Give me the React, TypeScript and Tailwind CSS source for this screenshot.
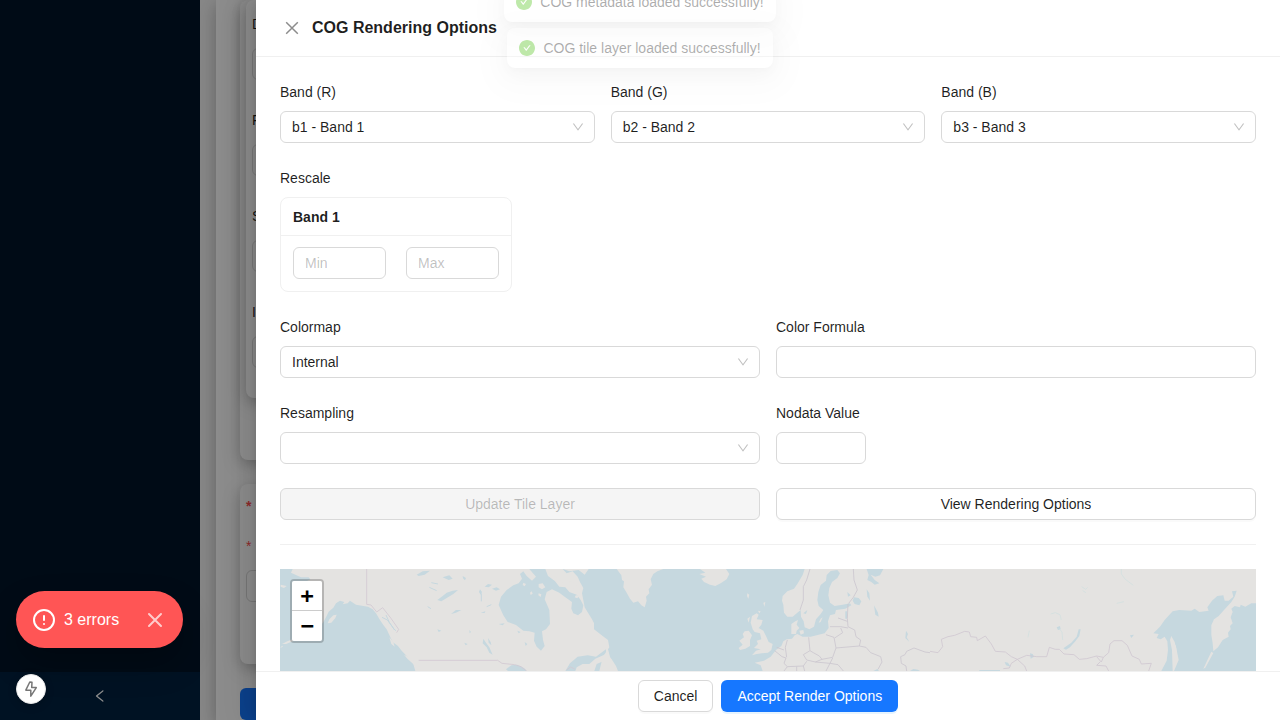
import React from "react";

const controlBase =
  "h-8 rounded-md border border-[#d9d9d9] bg-white px-[11px] text-sm text-black/88 outline-none placeholder:text-black/25 focus:border-[#1677ff]";

function Field({
  id,
  label,
  children,
}: {
  id: string;
  label: string;
  children: React.ReactNode;
}) {
  return (
    <div className="flex min-w-0 flex-1 flex-col gap-2">
      <label htmlFor={id} className="text-sm leading-[22px] text-black/88">
        {label}
      </label>
      {children}
    </div>
  );
}

function ChevronDown() {
  return (
    <svg
      viewBox="64 64 896 896"
      className="pointer-events-none absolute top-[10px] right-[11px] size-3 text-black/25"
      fill="currentColor"
      aria-hidden="true"
    >
      <path d="M884 256h-75c-5.1 0-9.9 2.5-12.9 6.6L512 654.2 227.9 262.6c-3-4.1-7.8-6.6-12.9-6.6h-75c-6.5 0-10.3 7.4-6.5 12.7l352.6 486.1c12.8 17.6 39 17.6 51.7 0l352.6-486.1c3.9-5.3.1-12.7-6.4-12.7z" />
    </svg>
  );
}

function SelectField({ id, label, options }: { id: string; label: string; options: string[] }) {
  return (
    <Field id={id} label={label}>
      <div className="relative flex">
        <select id={id} className={`${controlBase} w-full appearance-none`}>
          {options.map((o) => (
            <option key={o}>{o}</option>
          ))}
        </select>
        <ChevronDown />
      </div>
    </Field>
  );
}

function CloseIcon({ className }: { className: string }) {
  return (
    <svg
      viewBox="0 0 16 16"
      fill="none"
      stroke="currentColor"
      strokeWidth="1.500"
      className={className}
      aria-hidden="true"
    >
      <path d="M2.200 2.200L13.800 13.800M13.800 2.200L2.200 13.800" />
    </svg>
  );
}

function Toast({ text }: { text: string }) {
  return (
    <div className="flex h-10 items-center gap-2 rounded-lg bg-white px-3 text-sm text-black/88 opacity-[0.37] shadow-[0_6px_16px_0_rgba(0,0,0,0.06),0_3px_6px_-4px_rgba(0,0,0,0.08),0_9px_28px_8px_rgba(0,0,0,0.05)]">
      <svg viewBox="64 64 896 896" className="size-4 text-[#52c41a]" fill="currentColor" aria-hidden="true">
        <path d="M512 64C264.600 64 64 264.600 64 512s200.600 448 448 448 448-200.600 448-448S759.400 64 512 64zm193.500 301.700l-210.600 292a31.800 31.800 0 01-51.700 0L318.500 484.900c-3.800-5.300 0-12.700 6.500-12.700h46.900c10.200 0 19.900 4.900 25.900 13.300l71.200 98.800 157.200-218c6-8.300 15.600-13.300 25.900-13.300H699c6.500 0 10.300 7.400 6.500 12.700z" />
      </svg>
      <span>{text}</span>
    </div>
  );
}

const WATER = "#c6d8df";
const LAND = "#e4e3e1";

function WorldMap() {
  return (
    <svg
      viewBox="0 0 976 400"
      preserveAspectRatio="xMidYMin slice"
      className="size-full"
      role="img"
      aria-label="World map"
    >
      <rect width="976" height="400" fill={LAND} />
      <g transform="translate(-4 -9) scale(0.33333)" fill={WATER}>
        <path d="M12 27H50L45 38 58 44 75 52 98 52 103 58 80 70 60 90 52 120 60 150 52 185 80 205 110 205 140 190 150 172 158 155 172 143 180 130 192 122 205 126 200 133 215 130 222 122 240 134 262 138 276 140 290 148 300 160 312 180 322 195 332 208 340 225 350 246 366 258 377 272 390 286 402 298 412 312 418 333V600H12Z" />
        <path d="M668 135L675 110 692 90 712 76 728 70 738 56 732 42 742 34 752 48 768 62 780 50 760 27H808L816 48 836 62 850 80 868 82 880 96 902 104 914 120 922 136 918 156 906 166 892 160 886 146 888 126 868 112 850 98 828 88 812 96 806 118 820 150 822 192 810 208 798 214 801 240 806 258 795 272 782 260 774 242 776 218 760 214 742 212 720 195 695 186 682 166Z" />
        <path d="M860 27L872 40 890 34 905 50 912 66 922 84 918 100 926 142 948 178 962 205 990 225 1000 230V27H938L926 44 908 30 880 34Z" />
        <path d="M868 333L882 310 905 290 935 286 960 290 990 268V282L958 296 940 312 920 312 902 322 898 333Z" />
        <path d="M955 333L962 312 976 306 990 300V333Z" />
        <path d="M484 120L500 108 512 98 530 92 546 90 532 102 516 112 496 124Z" />
        <path d="M422 44L440 34 462 32 446 44 428 48ZM500 52L520 46 530 56 518 60ZM525 162L540 150 556 150 540 158ZM560 48l10 6-3 7-6-6ZM626 80l10-8 12 2-10 8ZM612 88l6 8-4 8-5-8ZM648 86l14-4 10 6-12 4ZM484 208l12 4-8 4ZM580 210l5 6-4 4ZM614 158l14-4-2 5ZM668 192l18-2-6 6ZM565 248l10 4-6 4Z" />
        <path d="M622 236L630 248 640 262 650 284 640 278 632 262 620 250ZM636 234l8 12 2 10-8-8ZM690 328L706 316 724 314 744 324 752 333H696ZM724 212l10 4-6 4ZM746 246l8 6-5 6Z" />
        <g fill={LAND}>
          <path d="M155 190L160 178 172 166 182 164 178 174 166 188ZM14 74L32 78 24 84 14 80ZM18 252L34 244 54 236 50 244 30 252ZM788 72L800 70 808 82 798 88 788 82ZM762 98l5-4 3 7-6 4ZM788 100l8 3-2 8-7-5ZM742 68l8 4-4 7-6-4ZM820 40L850 58 864 72 850 70 828 56ZM880 62L900 72 912 88 896 88 884 78ZM384 284l20 10 20 18 8 10-16-6-22-20ZM340 232l12 14 4 14-10-8ZM900 105l8 4-4 6-8-3ZM322 184l12 14 4 10-10-8Z" />
        </g>
        <g fill="none" stroke={WATER} strokeWidth="3">
          <path d="M330 165l10 22 14 20M318 172l16 8 22 30M352 206l8 6M466 68l20 4M460 82l22 10M616 100v24M455 140l10 6M632 140l14-6" />
          <path stroke={LAND} d="M14 262l6-3" />
        </g>
        <g fill="none" stroke="#d3c9d3" strokeWidth="2.5">
          <path d="M272 27V133L285 135 302 156 320 143 345 175 368 208 362 218" />
          <path d="M428 301H665L678 310 716 314 735 320 752 333M872 330l12-9 12 6" />
        </g>
      </g>
      <g transform="translate(320 -9) scale(0.33333)" fill={WATER}>
        <path d="M-18 27H614L608 45 592 72 582 86 562 94 548 108 546 122 550 134 552 158 562 170 578 170 592 158 602 150 603 170 611 184 614 202 628 208 642 200 648 178 662 162 670 150 656 138 652 120 655 96 662 75 678 62 680 45 692 33 712 30 720 40 712 54 696 66 688 84 685 106 690 128 704 138 728 134 750 130 754 136 736 146 708 150 705 162 690 166 684 184 686 204 674 220 650 226 632 230 608 230 592 222 584 226 576 236 560 238 550 244 544 258 528 270 512 290 492 302 464 308 482 316 488 333V600H-18V600L50 333 30 290 24 268 28 262 24 240 8 228 -18 208Z" />
        <path d="M800 27L806 45 802 60 814 66 824 74 838 70 824 60 812 44 826 50 840 46 850 27ZM762 112L776 114 784 124 778 136 764 132 758 122ZM800 88l8 12 2 22-8-12ZM822 136l12 22 2 12-10-6ZM736 154h5v22h-5ZM742 96l10 10-8 4ZM918 212l6 10-4 10 8 14-12-12ZM930 333l10-6 14 2 6 4ZM820 333l12-6 5 6ZM610 160l12-10-4 12Z" />
        <g fill={LAND}>
          <path d="M50 27L64 46 66 60 72 64 70 82 80 98 90 116 100 128 114 124 124 136 134 142 140 122 138 110 148 100 146 88 156 74 152 58 160 42 172 34 190 27Z" />
          <path d="M300 27L316 38 298 42 318 50 304 56 312 66 330 74 346 78 362 70 380 58 388 42 378 27Z" />
          <path d="M416 264L428 254 418 242 432 232 428 222 434 214 446 212 456 226 450 240 450 258 436 266 420 270Z" />
          <path d="M458 208L452 188 456 168 470 160 476 164 470 178 488 180 484 194 476 204 490 212 498 228 506 246 518 252 514 270 504 278 486 280 470 282 456 286 468 272 482 268 462 264 474 252 470 242 484 238 480 220 464 216Z" />
          <path d="M574 222L574 192 586 184 594 180 590 194 598 204 590 212 588 222ZM598 212l12-2 2 10-10 4ZM656 188l6-12 6-4-6 14ZM442 100l6 4-3 12-4-8ZM490 128l6-2-3 14ZM442 176l8-6-4 18ZM474 152l8 2-4 6Z" />
          <path d="M-2 333L8 292 22 270 26 278 18 290 34 296 48 318 54 333Z" />
        </g>
        <g fill="none" stroke="#cbc6cf" strokeWidth="2.5">
          <path d="M630 27L620 60 610 80 610 120 600 150M760 27L762 60 772 90 760 112 746 130M744 132L742 175 744 200 764 210 768 230 782 240 778 258 708 264 698 292 666 298M714 174L742 184M690 200L722 200 744 204M722 204L728 218 704 234M678 224L702 232 708 264M626 232L630 272 610 284 620 300 646 306 666 298 658 288 640 278 630 272M524 272L546 290 558 294 552 310 562 320 610 318 620 304M562 240L556 262 560 292M530 262l22 8M552 333L562 320M590 320v13M610 318l4 15M646 306l44 4 8-16M690 310l-12 23M690 310l24 4 16 19M778 258l20 4 14 16 30 12 4 16-12 22" />
          <path d="M990 278L975 276 942 264 920 274 915 284 902 290 904 310 918 318 920 333" />
        </g>
      </g>
      <g transform="translate(650 -9) scale(0.33333)" fill={WATER}>
        <path d="M670 220L690 200 704 180 728 154 748 150 784 152 794 146 808 156 836 152 832 142 846 122 862 108 880 106 884 122 896 122 910 110 906 94 920 92 914 110 904 126 880 152 866 168 852 178 844 196 844 224 848 250 850 274 864 262 878 240 896 230 894 218 902 208 900 198 908 190 902 172 908 156 904 146 914 138 930 142 932 134 946 140 964 130 978 130V600H740L732 333 746 300 740 270 734 246 724 228 720 240 726 270 728 333V600H690L694 333 710 302 714 270 712 244 704 230 692 238 680 234 686 222Z" />
        <path d="M400 265L424 248 440 230 446 208 452 208 448 228 436 244 420 262 408 269ZM600 226l12-2-8 10ZM380 202l10-4 2 10-8 2ZM300 280l8 2 4 8-10 6ZM224 306l10 2 8 12-14-4ZM370 268l4 12M148 330h62v5h-62Z" />
        <path fill={LAND} d="M728 246L738 258 742 290 744 302 734 300 728 280ZM844 275l6 4-24 44-6 3 14-30Z" />
        <g fill="none" stroke="#cfe0df" strokeWidth="2">
          <path d="M574 27V42L586 58 610 76M362 162L376 158 390 164 394 180M386 204L396 216 398 240M298 212l-4 20M560 130l22-5M455 80l12 8 6-6M458 92l10 6" />
        </g>
        <g fill="none" stroke="#d0c8d1" strokeWidth="2.5">
          <path d="M0 274L24 278 38 260 34 238 54 230 74 226 104 214 118 216 122 230 140 232 142 242 166 228 184 252 196 274 226 276 244 290 262 298 290 286 320 290 350 290 358 262 376 268 388 268 402 282 432 284 448 298 470 296 500 288 520 292 536 278 540 252 552 242 576 242 592 256 606 288 628 298 634 312 664 310 656 333M262 298L284 318 290 333M262 298L244 310 238 324 220 326M500 290L512 304 500 316 528 318 536 333M520 292l-6 14" />
        </g>
      </g>
    </svg>
  );
}

const backgroundFields = ["Description", "Format", "Spatial", "Items"];
const cardShadow = "shadow-[0_4px_12px_0_rgba(0,0,0,0.12),0_6px_20px_0_rgba(0,0,0,0.16)]";

function BackgroundPage() {
  return (
    <div className="flex h-full" aria-hidden="true">
      <aside className="flex w-[200px] shrink-0 flex-col justify-end bg-[#001529]">
        <div className="flex h-12 items-center justify-center bg-[#002140] text-white">
          <svg viewBox="64 64 896 896" className="size-[14px]" fill="currentColor">
            <path d="M724 218.300V141c0-6.700-7.700-10.400-12.900-6.300L260.300 486.800a31.860 31.860 0 000 50.300l450.800 352.100c5.300 4.100 12.900.4 12.900-6.300v-77.300c0-4.900-2.300-9.600-6.100-12.600l-360-281 360-281.100c3.800-3 6.100-7.700 6.100-12.600z" />
          </svg>
        </div>
      </aside>
      <main className="flex-1 overflow-hidden bg-[#f5f5f5] px-4">
        <div className={`h-full bg-white px-6 ${cardShadow}`}>
          <div className={`rounded-lg bg-white px-[6px] pb-[62px] ${cardShadow}`}>
            <div className={`rounded-lg bg-white px-[6px] pt-3 pb-[2px] ${cardShadow}`}>
              {backgroundFields.map((name) => (
                <div key={name} className="pb-7">
                  <div className="mb-3 h-6 text-sm leading-6 text-black/88">{name}</div>
                  <div className="h-8 rounded-md border border-[#d9d9d9]" />
                </div>
              ))}
            </div>
          </div>
          <div className={`mt-6 h-[180px] rounded-lg bg-white px-[6px] pt-[10px] ${cardShadow}`}>
            <div className="h-10 text-sm leading-6 font-bold text-[#ff4d4f]">*</div>
            <div className="h-9 text-sm leading-6 text-[#ff4d4f]">*</div>
            <div className="h-8 rounded-md border border-[#d9d9d9]" />
          </div>
          <div className="mt-6 h-8 w-32 rounded-md bg-[#1677ff]" />
        </div>
      </main>
    </div>
  );
}

export default function App() {
  return (
    <div className="relative h-screen overflow-hidden font-['Liberation_Sans',Arial,sans-serif] text-sm">
      <BackgroundPage />
      <div className="absolute inset-0 flex justify-end bg-black/45">
        <section
          role="dialog"
          aria-labelledby="drawer-title"
          className="flex h-full w-4/5 flex-col bg-white shadow-[-6px_0_16px_0_rgba(0,0,0,0.08),-3px_0_6px_-4px_rgba(0,0,0,0.12),-9px_0_28px_8px_rgba(0,0,0,0.05)]"
        >
          <header className="flex h-[57px] shrink-0 items-center border-b border-[#f0f0f0] px-6">
            <button type="button" aria-label="Close" className="mr-2 flex size-6 items-center justify-center text-black/45">
              <CloseIcon className="size-4" />
            </button>
            <h1 id="drawer-title" className="text-base leading-6 font-semibold text-black/88">
              COG Rendering Options
            </h1>
          </header>

          <div className="min-h-0 flex-1 overflow-y-auto p-6 [scrollbar-width:none]">
            <form className="flex flex-col gap-6" onSubmit={(e) => e.preventDefault()}>
              <div className="flex gap-4">
                <SelectField id="band-r" label="Band (R)" options={["b1 - Band 1"]} />
                <SelectField id="band-g" label="Band (G)" options={["b2 - Band 2"]} />
                <SelectField id="band-b" label="Band (B)" options={["b3 - Band 3"]} />
              </div>

              <Field id="rescale-min" label="Rescale">
                <div className="w-[232px] rounded-lg border border-[#f0f0f0]">
                  <div className="-mb-px flex h-[38px] items-center border-b border-[#f0f0f0] px-3 font-semibold text-black/88">
                    Band 1
                  </div>
                  <div className="flex gap-5 p-3">
                    <input id="rescale-min" aria-label="Minimum" placeholder="Min" className={`${controlBase} w-full min-w-0`} />
                    <input aria-label="Maximum" placeholder="Max" className={`${controlBase} w-full min-w-0`} />
                  </div>
                </div>
              </Field>

              <div className="flex gap-4">
                <SelectField id="colormap" label="Colormap" options={["Internal"]} />
                <Field id="formula" label="Color Formula">
                  <input id="formula" className={controlBase} />
                </Field>
              </div>

              <div className="flex gap-4">
                <SelectField id="resampling" label="Resampling" options={[""]} />
                <Field id="nodata" label="Nodata Value">
                  <input id="nodata" className={`${controlBase} w-[90px]`} />
                </Field>
              </div>

              <div className="flex gap-4">
                <button
                  type="button"
                  disabled
                  className="h-8 flex-1 rounded-md border border-[#d9d9d9] bg-black/4 text-black/25"
                >
                  Update Tile Layer
                </button>
                <button
                  type="button"
                  className="h-8 flex-1 rounded-md border border-[#d9d9d9] bg-white text-black/88 shadow-[0_2px_0_rgba(0,0,0,0.02)]"
                >
                  View Rendering Options
                </button>
              </div>
            </form>

            <hr className="my-6 border-t border-[#f0f0f0]" />

            <div className="relative h-[400px] overflow-hidden">
              <WorldMap />
              <div className="absolute top-[10px] left-[10px] flex flex-col rounded-sm border-2 border-black/20 bg-clip-padding font-['Lucida_Console',Monaco,monospace]">
                <button
                  type="button"
                  aria-label="Zoom in"
                  className="flex h-[30px] w-[30px] items-center justify-center rounded-t-xs border-b border-[#ccc] bg-white text-[22px] leading-[30px] font-bold text-black"
                >
                  +
                </button>
                <button
                  type="button"
                  aria-label="Zoom out"
                  className="flex h-[30px] w-[30px] items-center justify-center rounded-b-xs bg-white text-[22px] leading-[30px] font-bold text-black"
                >
                  −
                </button>
              </div>
            </div>
          </div>

          <footer className="flex shrink-0 justify-center gap-2 border-t border-[#f0f0f0] px-4 py-2">
            <button
              type="button"
              className="h-8 rounded-md border border-[#d9d9d9] bg-white px-[15px] text-black/88 shadow-[0_2px_0_rgba(0,0,0,0.02)]"
            >
              Cancel
            </button>
            <button
              type="button"
              className="h-8 rounded-md bg-[#1677ff] px-4 text-white shadow-[0_2px_0_rgba(5,145,255,0.1)]"
            >
              Accept Render Options
            </button>
          </footer>
        </section>
      </div>

      <div className="pointer-events-none absolute inset-x-0 -top-[18px] flex flex-col items-center gap-[6px]">
        <Toast text="COG metadata loaded successfully!" />
        <Toast text="COG tile layer loaded successfully!" />
      </div>

      <div className="absolute bottom-[72px] left-4 flex h-[57px] items-center rounded-full bg-[#ff5555] px-4 text-base text-white shadow-[0_16px_32px_rgba(0,0,0,0.25)]">
        <svg
          viewBox="0 0 24 24"
          className="mr-2 size-6"
          fill="none"
          stroke="currentColor"
          strokeWidth="2"
          strokeLinecap="round"
          aria-hidden="true"
        >
          <circle cx="12" cy="12" r="10" />
          <path d="M12 8v4M12 16h.01" />
        </svg>
        <span>3 errors</span>
        <button type="button" aria-label="Dismiss errors" className="ml-6 opacity-70">
          <svg viewBox="0 0 24 24" className="size-6" fill="none" stroke="currentColor" strokeWidth="2" strokeLinecap="round" aria-hidden="true">
            <path d="M18 6L6 18M6 6l12 12" />
          </svg>
        </button>
      </div>

      <div className="absolute bottom-4 left-4 flex size-[30px] items-center justify-center rounded-full border border-[#e8e8e8] bg-white shadow-[0_2px_8px_rgba(0,0,0,0.2)]">
        <svg viewBox="0 0 16 20" className="h-5 w-4" fill="none" stroke="#777" strokeWidth="1.500" strokeLinejoin="round" aria-hidden="true">
          <path d="M6.800 3L2.800 11.200H7.800V17.200L13.300 8.600H8.700L9 3.200Z" />
        </svg>
      </div>
    </div>
  );
}
